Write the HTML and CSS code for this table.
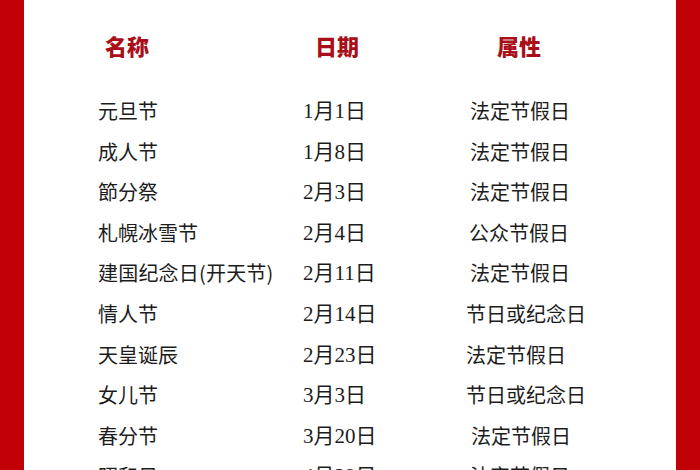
FILE: index.html
```html
<!DOCTYPE html>
<html lang="zh">
<head>
<meta charset="utf-8">
<link rel="stylesheet" href="styles.css">
</head>
<body>
<div class="sheet">
  <div class="bar"></div>
  <main class="content">
    <div class="head">
      <div class="h h1">名称</div>
      <div class="h h2">日期</div>
      <div class="h h3">属性</div>
    </div>
    <div class="rows">
      <div class="row"><span class="name">元旦节</span><span class="date">1月1日</span><span class="kind">法定节假日</span></div>
      <div class="row"><span class="name">成人节</span><span class="date">1月8日</span><span class="kind">法定节假日</span></div>
      <div class="row"><span class="name">節分祭</span><span class="date">2月3日</span><span class="kind">法定节假日</span></div>
      <div class="row"><span class="name">札幌冰雪节</span><span class="date">2月4日</span><span class="kind kind-m">公众节假日</span></div>
      <div class="row"><span class="name name-wide">建国纪念日(开天节)</span><span class="date">2月11日</span><span class="kind">法定节假日</span></div>
      <div class="row"><span class="name">情人节</span><span class="date">2月14日</span><span class="kind kind-l">节日或纪念日</span></div>
      <div class="row"><span class="name">天皇诞辰</span><span class="date">2月23日</span><span class="kind kind-l">法定节假日</span></div>
      <div class="row"><span class="name">女儿节</span><span class="date">3月3日</span><span class="kind kind-l">节日或纪念日</span></div>
      <div class="row"><span class="name">春分节</span><span class="date">3月20日</span><span class="kind kind-r">法定节假日</span></div>
      <div class="row"><span class="name">昭和日</span><span class="date">4月29日</span><span class="kind">法定节假日</span></div>
    </div>
  </main>
  <div class="bar"></div>
</div>
</body>
</html>
```
FILE: styles.css
```css
html, body {
  margin: 0;
  padding: 0;
  background: #ffffff;
}
.sheet {
  display: flex;
  width: 700px;
  height: 470px;
  overflow: hidden;
}
.bar {
  width: 24px;
  flex: none;
  background: #c10008;
}
.content {
  flex: 1;
  padding: 25px 0 0 74px;
  font-family: "Noto Sans CJK SC", sans-serif;
  color: #1c1c1c;
}
.head {
  display: grid;
  grid-template-columns: 204px 168px 1fr;
  height: 40px;
  line-height: 40px;
}
.h {
  font-size: 22px;
  font-weight: 900;
  color: #a90f18;
}
.h1 { padding-left: 7px; }
.h2 { padding-left: 13px; }
.h3 { padding-left: 27px; }
.rows {
  margin-top: 26px;
}
.row {
  display: grid;
  grid-template-columns: 204px 168px 1fr;
  height: 40.6px;
  line-height: 40.6px;
  font-size: 20px;
}
.name-wide {
  letter-spacing: 0.2px;
}
.date {
  font-family: "Liberation Serif", "Noto Sans CJK SC", serif;
  font-size: 21px;
  padding-left: 1px;
}
.kind-m { margin-left: -1px; }
.kind-l { margin-left: -4px; }
.kind-r { margin-left: 1px; }
```
